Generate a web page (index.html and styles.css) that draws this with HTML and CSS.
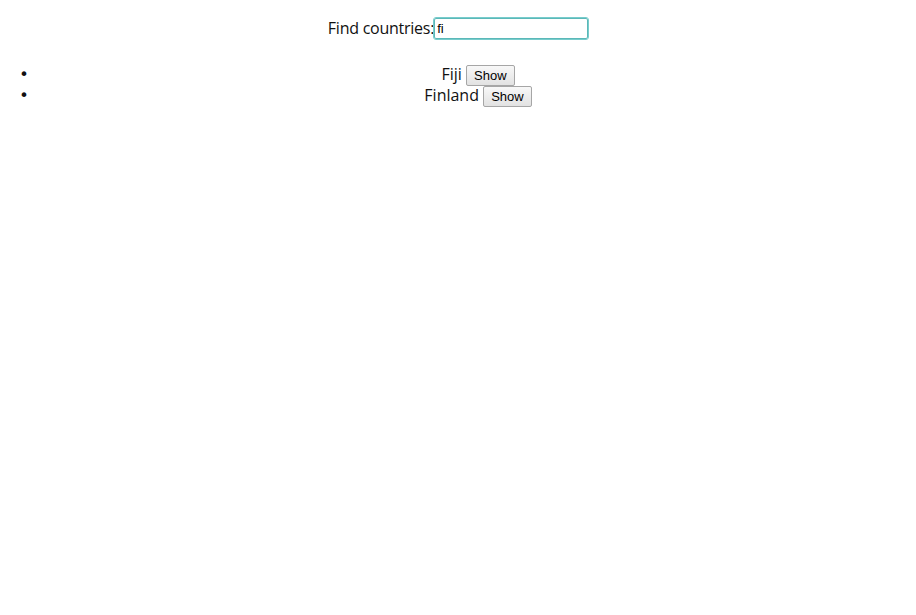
FILE: index.html
```html
<!DOCTYPE html>
<html>
<head>
<meta charset="utf-8">
<link rel="stylesheet" href="styles.css">
</head>
<body>
<div class="app">
  <div class="search">Find countries:<input class="search-input" type="text" value="fi"></div>
  <ul class="list">
    <li class="item">Fiji <button class="show-btn">Show</button></li>
    <li class="item">Finland <button class="show-btn">Show</button></li>
  </ul>
</div>
</body>
</html>
```
FILE: styles.css
```css
body {
  margin: 8px;
  font-family: "Open Sans", sans-serif;
  font-size: 16px;
  color: #111;
  background: #fff;
}
.app {
  text-align: center;
}
.search {
  padding: 10px 0;
  height: 20px;
  line-height: 18px;
  display: flex;
  justify-content: center;
  align-items: center;
  letter-spacing: -0.25px;
}
.search-input {
  box-sizing: border-box;
  width: 154px;
  height: 21px;
  margin: 0;
  padding: 1px 2px;
  font-family: "Liberation Sans", sans-serif;
  font-size: 13px;
  letter-spacing: 0;
  border: 1px solid #5bb8b8;
  border-radius: 2px;
  outline: 1px solid #7cc;
  color: #000;
}
.list {
  margin: 16px 0;
  padding-left: 40px;
}
.item {
  height: 21px;
  line-height: 21px;
}
.item::marker {
  content: "\2022\2003\2009";
  font-family: "DejaVu Sans", sans-serif;
  font-size: 16px;
}
.show-btn {
  font-family: "Liberation Sans", sans-serif;
  font-size: 13px;
  height: 21px;
  padding: 1px 7px;
  margin: 0;
  border: 1px solid #a6a6a6;
  border-radius: 2px;
  background: linear-gradient(#f8f8f8, #e2e2e2);
  color: #000;
  vertical-align: middle;
}
```
